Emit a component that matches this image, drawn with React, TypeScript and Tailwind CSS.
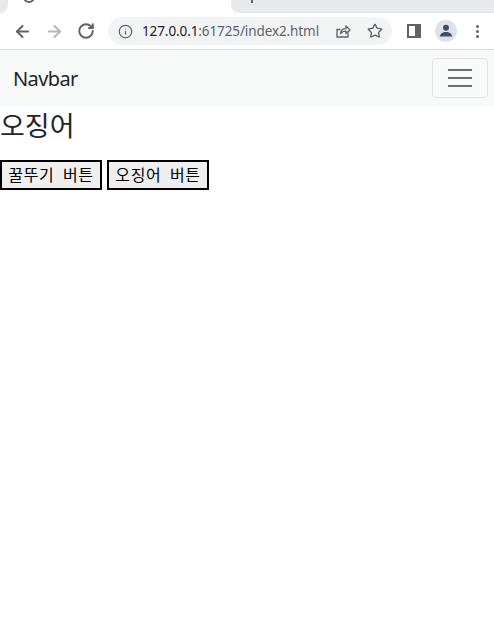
import { ArrowLeft, ArrowRight, RotateCw, Info, Star } from "lucide-react";

function ShareIcon() {
  return (
    <svg width="16" height="16" viewBox="0 0 16 16" fill="none" stroke="#5f6368" strokeWidth="1.3">
      <path d="M13 9.5V14H2V6.5h3.5" />
      <path d="M5.5 10.5c.4-3 2.6-4.8 5.5-4.8V3l4 3.9-4 3.6V8.2c-2.2-.1-4 .6-5.5 2.3z" strokeLinejoin="round" />
    </svg>
  );
}

function ProfileIcon() {
  return (
    <div className="flex h-[22px] w-[22px] items-center justify-center rounded-full bg-[#dfe1e8]">
      <svg width="14" height="14" viewBox="0 0 14 14" fill="#3f4d6b">
        <circle cx="7" cy="3.8" r="3" />
        <path d="M1 12.5c0-3 2.6-4.5 6-4.5s6 1.5 6 4.5z" />
      </svg>
    </div>
  );
}

export default function App() {
  return (
    <div className="h-[638px] w-[494px] overflow-hidden bg-white font-['Noto_Sans','Noto_Sans_CJK_KR',sans-serif] text-[#212529]">
      {/* tab strip */}
      <div className="flex h-[13px] items-start bg-white">
        <div className="h-[13px] w-[8px] rounded-br-lg bg-[#e8e9ed]" />
        <div className="relative h-[13px] w-[223px] overflow-hidden">
          <div className="absolute left-[15px] top-[-9px] h-[12px] w-[12px] rounded-full border-[2px] border-[#5f6368]" />
        </div>
        <div className="relative h-[13px] flex-1 rounded-bl-lg bg-[#e8e9ed]">
          <div className="absolute left-[20px] top-0 h-[3px] w-[2px] bg-[#5f6368]" />
        </div>
      </div>

      {/* chrome toolbar */}
      <div className="flex h-[37px] items-center border-b border-[#dadce0] bg-white">
        <div className="flex w-[108px] items-center gap-[13px] pl-[13px] text-[#5f6368]">
          <ArrowLeft size={19} strokeWidth={2.5} />
          <ArrowRight size={19} strokeWidth={2.5} className="text-[#b4b6b9]" />
          <RotateCw size={18} strokeWidth={2.6} />
        </div>
        <div className="flex h-[28px] w-[284px] items-center rounded-full bg-[#f1f3f4] pl-[10px] pr-[9px]">
          <Info size={15} strokeWidth={2} className="text-[#5f6368]" />
          <span className="ml-[9px] text-[13.5px] tracking-[-0.1px] text-[#5f6368]">
            <span className="text-[#202124]">127.0.0.1</span>:61725/index2.html
          </span>
          <div className="ml-auto flex items-center gap-[16px]">
            <ShareIcon />
            <Star size={16} strokeWidth={2} className="text-[#5f6368]" />
          </div>
        </div>
        <div className="flex flex-1 items-center pl-[15px]">
          <div className="flex h-[14px] w-[14px] justify-end border-[2px] border-[#5f6368] bg-white">
            <div className="h-full w-[4px] bg-[#5f6368]" />
          </div>
          <div className="ml-[14px]">
            <ProfileIcon />
          </div>
          <div className="ml-[19px] flex flex-col gap-[2px]">
            <span className="h-[3px] w-[3px] rounded-full bg-[#5f6368]" />
            <span className="h-[3px] w-[3px] rounded-full bg-[#5f6368]" />
            <span className="h-[3px] w-[3px] rounded-full bg-[#5f6368]" />
          </div>
        </div>
      </div>

      {/* navbar */}
      <nav className="flex h-[56px] items-center justify-between bg-[#f8f9f9] pl-[13px] pr-[6px]">
        <span className="pt-[2px] text-[20px] tracking-[-0.6px] text-[#212529]">Navbar</span>
        <button className="flex h-[40px] w-[56px] flex-col items-center justify-center gap-[6px] rounded border border-[#e5e5e5]">
          <span className="h-[2px] w-[24px] bg-[#6d6e70]" />
          <span className="h-[2px] w-[24px] bg-[#6d6e70]" />
          <span className="h-[2px] w-[24px] bg-[#6d6e70]" />
        </button>
      </nav>

      <h3 className="mt-[3px] text-[27px] leading-[34px]">오징어</h3>

      <div className="mt-[17px] flex gap-[5px]">
        <button className="h-[30px] w-[102px] border-2 border-black bg-[#efefef] text-[16px] tracking-[0.6px] text-black [word-spacing:4px]">꿀뚜기 버튼</button>
        <button className="h-[30px] w-[102px] border-2 border-black bg-[#efefef] text-[16px] tracking-[0.6px] text-black [word-spacing:4px]">오징어 버튼</button>
      </div>
    </div>
  );
}
